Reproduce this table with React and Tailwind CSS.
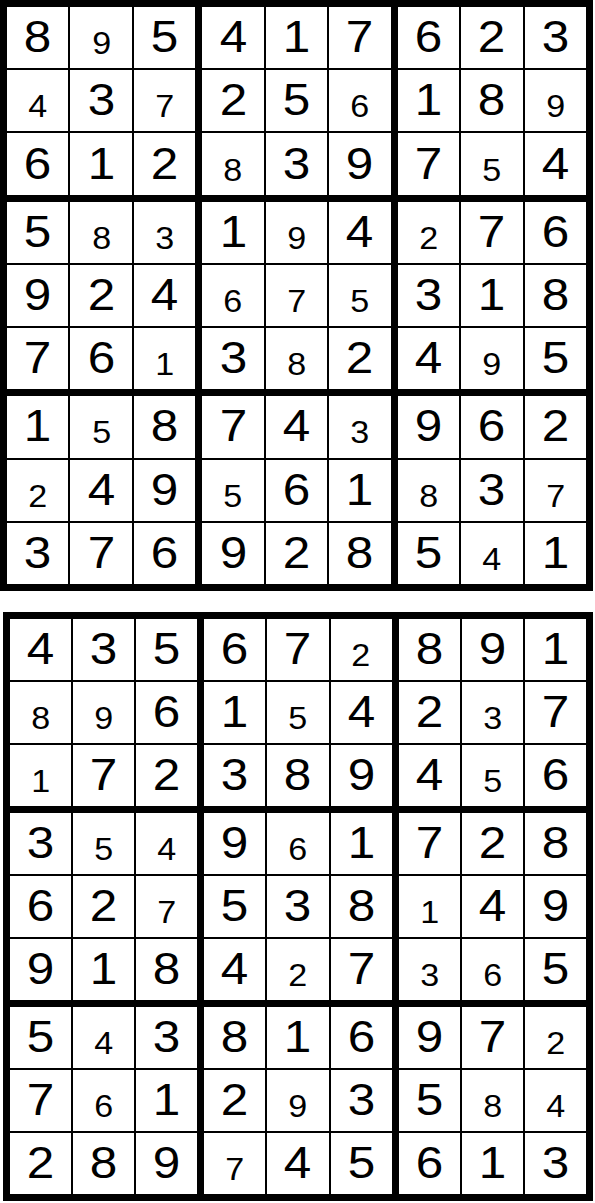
import React from 'react';

const puzzles = [
  {
    wrap: 'ml-0 mt-0 w-[593px] h-[591px]',
    rows: [
      ['895417623', '010000000'],
      ['437256189', '101001001'],
      ['612839754', '000100010'],
      ['583194276', '011010100'],
      ['924675318', '000111000'],
      ['761382495', '001010010'],
      ['158743962', '010001000'],
      ['249561837', '100100101'],
      ['376928541', '000000010'],
    ],
  },
  {
    wrap: 'ml-[3px] mt-[21px] w-[590px] h-[589px]',
    rows: [
      ['435672891', '000001000'],
      ['896154237', '110010010'],
      ['172389456', '100000010'],
      ['354961728', '011010000'],
      ['627538149', '001000100'],
      ['918427365', '000010110'],
      ['543816972', '010000001'],
      ['761293584', '010010011'],
      ['289745613', '000100000'],
    ],
  },
];

const idx = [0, 1, 2];

function Cell({ digit, small }) {
  return (
    <div className="bg-white flex items-center justify-center">
      {small ? (
        <span className="text-[31px] leading-none pt-[12px] scale-x-[1.1]">{digit}</span>
      ) : (
        <span className="text-[45px] leading-none pb-[2px] scale-x-[1.1]">{digit}</span>
      )}
    </div>
  );
}

function Board({ wrap, rows }) {
  return (
    <div className={`${wrap} grid grid-cols-3 grid-rows-3 gap-[7px] bg-black border-[7px] border-black`}>
      {idx.map(br =>
        idx.map(bc => (
          <div key={`${br}-${bc}`} className="grid grid-cols-3 grid-rows-3 gap-[2px] bg-black">
            {idx.map(r =>
              idx.map(c => {
                const row = rows[br * 3 + r];
                const col = bc * 3 + c;
                return <Cell key={`${r}-${c}`} digit={row[0][col]} small={row[1][col] === '1'} />;
              })
            )}
          </div>
        ))
      )}
    </div>
  );
}

export default function App() {
  return (
    <div className="w-[595px] h-[1203px] bg-white text-black font-['Liberation_Sans',Arial,sans-serif] overflow-hidden">
      {puzzles.map((p, i) => (
        <Board key={i} wrap={p.wrap} rows={p.rows} />
      ))}
    </div>
  );
}
